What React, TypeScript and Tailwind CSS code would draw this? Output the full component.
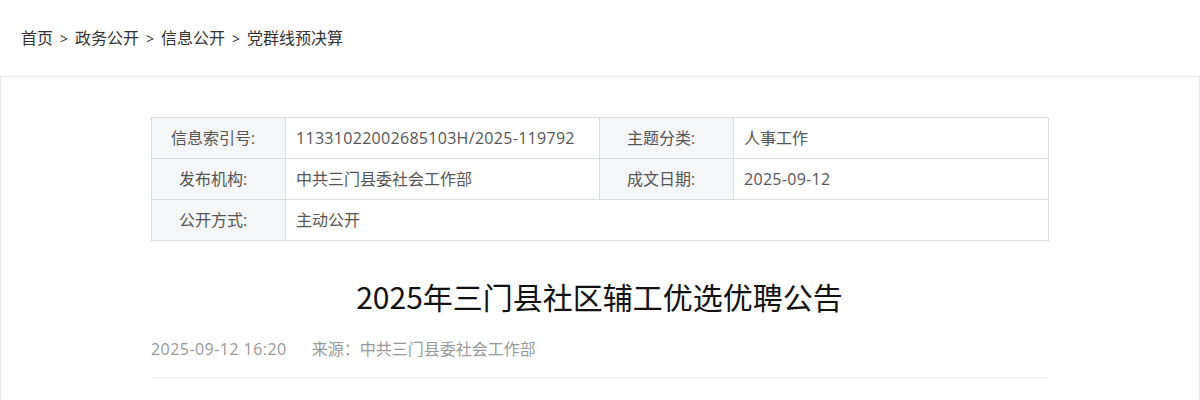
export default function App() {
  const font = { fontFamily: '"Open Sans", "Noto Sans CJK SC", sans-serif' };
  return (
    <div className="min-h-screen bg-white" style={font}>
      {/* Breadcrumb */}
      <div className="h-[76px] flex items-center pl-[21px] text-[16px] text-[#333] gap-[7px]">
        <span>首页</span>
        <span className="text-[14px]">&gt;</span>
        <span>政务公开</span>
        <span className="text-[14px]">&gt;</span>
        <span>信息公开</span>
        <span className="text-[14px]">&gt;</span>
        <span>党群线预决算</span>
      </div>

      <div className="border border-[#e8e8e8] pt-[40px] pb-10">
        <div className="w-[897px] ml-[150px]">
          {/* Meta table */}
          <div className="grid grid-cols-[134px_314px_134px_315px] border-l border-t border-[#dcdcdc] text-[16px]">
            <Label>信息索引号:</Label>
            <Value>
              <span className="tracking-[0.3px]">11331022002685103H/2025-119792</span>
            </Value>
            <Label>主题分类:</Label>
            <Value>人事工作</Value>
            <Label>发布机构:</Label>
            <Value>中共三门县委社会工作部</Value>
            <Label>成文日期:</Label>
            <Value>
              <span className="tracking-[0.3px]">2025-09-12</span>
            </Value>
            <Label>公开方式:</Label>
            <div className="col-span-3 h-[41px] flex items-center pl-[10px] text-[#555] border-r border-b border-[#dcdcdc]">
              主动公开
            </div>
          </div>

          <h1
            className="mt-[35px] text-center text-[30px] leading-[40px] text-[#111]"
            style={{ fontFamily: '"Noto Sans CJK SC", sans-serif' }}
          >
            2025年三门县社区辅工优选优聘公告
          </h1>

          <div className="mt-[21px] pb-[16px] border-b border-[#eeeeee] flex text-[16px] leading-[24px] text-[#999] gap-[25px]">
            <span className="tracking-[0.45px]">2025-09-12 16:20</span>
            <span>来源：中共三门县委社会工作部</span>
          </div>
        </div>
      </div>
    </div>
  );
}

function Label({ children }: { children: React.ReactNode }) {
  return (
    <div className="h-[41px] flex items-center justify-center pr-[11px] bg-[#f5f6f7] text-[#555] border-r border-b border-[#dcdcdc]">
      {children}
    </div>
  );
}

function Value({ children }: { children: React.ReactNode }) {
  return (
    <div className="h-[41px] flex items-center pl-[10px] text-[#555] border-r border-b border-[#dcdcdc]">
      {children}
    </div>
  );
}
